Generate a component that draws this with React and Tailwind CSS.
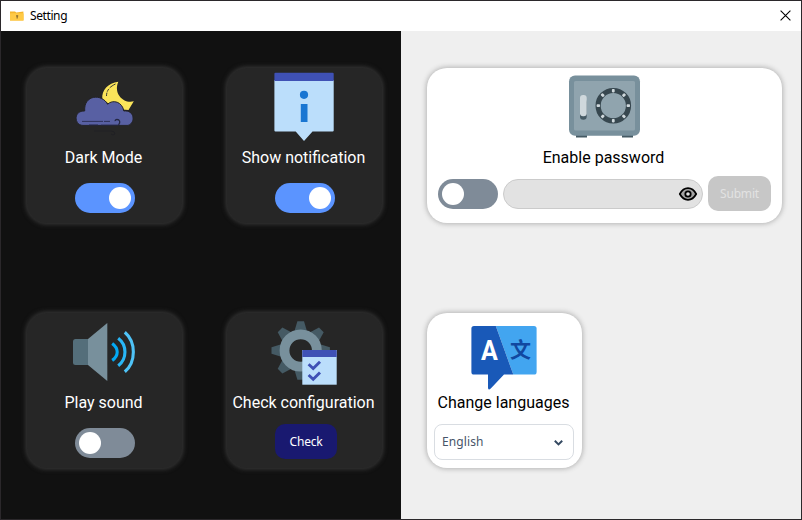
import React from "react";

function Toggle({ on, className = "" }) {
  return (
    <div
      className={`flex h-[30px] w-[60px] items-center rounded-full px-1 ${
        on ? "justify-end bg-[#5b94ff]" : "justify-start bg-[#7f8b98]"
      } ${className}`}
    >
      <div className="size-[22px] rounded-full bg-white" />
    </div>
  );
}

function Card({ dark, wide, icon, label, children }) {
  return (
    <section
      className={`mt-[37px] ml-[26px] flex h-[155px] flex-col items-center rounded-[20px] font-[Roboto,sans-serif] ${
        wide ? "w-[355px]" : "w-[155px]"
      } ${
        dark
          ? "bg-[#262626] text-white shadow-[0_0_5px_1px_#3c3c3c]"
          : "bg-white text-black shadow-[0_0_5px_1px_#b4b4b4]"
      }`}
    >
      <div className="h-[77px] w-[155px] shrink-0">{icon}</div>
      <div className="mt-px -ml-[2px] h-[23px] shrink-0 text-base leading-6 whitespace-nowrap">{label}</div>
      {children}
    </section>
  );
}

function MoonIcon() {
  return (
    <svg viewBox="27 68 155 77" className="size-full">
      <path d="M118.3 81.7C108 83 101.5 90 102.3 99L116 109L128.5 110L133.8 101.3C124 104 113 94 118.3 81.7Z" fill="#fbe55a" />
      <path d="M115.5 84C109 87 106.5 91 106.5 96" fill="none" stroke="#3a3932" strokeWidth="1" strokeDasharray="7 1.5 3 1" />
      <path
        d="M83 125.4C74 125.4 73 110.5 84.7 111C83.5 94.5 102 93.5 107.6 104.2C113 99 122.5 102 123.8 111C134.5 109.5 136 123 128 125.4Z"
        fill="#5860a3"
        stroke="#232329"
        strokeWidth="1"
      />
      <path d="M82 121.4H103M104 121.4H110" stroke="#2a2d50" strokeWidth="0.9" />
      <path d="M118.5 125C121 122 119.5 119.5 117 119.5Q115 119.5 115.2 121.2" fill="none" stroke="#242743" strokeWidth="1.3" />
      <path d="M89 125H98M101 125.2H118" stroke="#242743" strokeWidth="0.9" />
      <path d="M94 131H111Q115 131 115 134Q113 136 111 134" fill="none" stroke="#202024" strokeWidth="1" />
    </svg>
  );
}

function InfoIcon() {
  return (
    <svg viewBox="227 68 155 77" className="size-full">
      <path d="M274.4 80H333.7V130.5Q333.7 131.6 332.6 131.6H312.5L304 141L295.7 131.6H275.5Q274.4 131.6 274.4 130.5Z" fill="#bbdefb" />
      <path d="M274.4 81V73.8Q274.4 72.7 275.5 72.7H332.6Q333.7 72.7 333.7 73.8V81Z" fill="#3f51b5" />
      <circle cx="304" cy="94.8" r="4.1" fill="#1976d2" />
      <rect x="300.8" y="104" width="6.7" height="18" fill="#1976d2" />
    </svg>
  );
}

function SpeakerIcon() {
  return (
    <svg viewBox="27 313 155 77" className="size-full">
      <path d="M89 339H75.5Q73 339 73 341.5V362.5Q73 365 75.5 365H89Z" fill="#546e7a" />
      <path d="M88 339L107.3 323V381L88 365Z" fill="#78909c" />
      <g fill="none" strokeWidth="3.1">
        <path d="M112.2 343.4Q117.2 347 117.2 352T112.2 360.4" stroke="#03a9f4" />
        <path d="M118.2 338.2C127.2 345 127.2 359 118.2 365.8" stroke="#29b6f6" />
        <path d="M124.8 332.2C136.2 342 136.2 362 124.8 371.8" stroke="#4fc3f7" />
      </g>
    </svg>
  );
}

function GearIcon() {
  const teeth = [0, 45, 90, 135, 180, 225, 270, 315];
  return (
    <svg viewBox="227 313 155 77" className="size-full">
      {teeth.map((a) => (
        <path key={a} d="M294.2 332L297.4 321.3H304L307.2 332Z" fill="#455a64" transform={`rotate(${a} 300.7 350.5)`} />
      ))}
      <circle cx="300.7" cy="350.5" r="16.2" fill="none" stroke="#78909c" strokeWidth="9.8" />
      <rect x="302.3" y="350" width="34.4" height="34.7" fill="#bbdefb" />
      <path d="M302.3 357V350.7Q302.3 350 303 350H336Q336.7 350 336.7 350.7V357Z" fill="#3f51b5" />
      <path d="M308.6 364.2L313.2 368.5L320 361.7M308.6 375L313.2 379.3L320 372.5" fill="none" stroke="#3f51b5" strokeWidth="2.9" />
    </svg>
  );
}

function SafeIcon() {
  const bolts = [0, 45, 90, 135, 180, 225, 270, 315];
  return (
    <svg viewBox="527 68 155 77" className="size-full">
      <path d="M576 134H587V137.6H576ZM622 134H633V137.6H622Z" fill="#455a64" />
      <rect x="569" y="75.5" width="71" height="60.3" rx="6" fill="#78909c" />
      <rect x="574" y="81" width="61" height="49.5" rx="1.5" fill="#90a4ae" />
      <rect x="580" y="99" width="6.7" height="20.8" rx="3.3" fill="#455a64" />
      <rect x="580" y="95" width="6.7" height="21.3" rx="3" fill="#cfd8dc" />
      <circle cx="613.3" cy="105.7" r="15.2" fill="none" stroke="#37474f" strokeWidth="5.2" />
      {bolts.map((a) => (
        <rect key={a} x="611.9" y="89" width="2.8" height="3.4" rx="0.8" fill="#cfd8dc" transform={`rotate(${a} 613.3 105.7)`} />
      ))}
    </svg>
  );
}

function TranslateIcon() {
  return (
    <svg viewBox="427 313 155 77" className="size-full">
      <path d="M495.8 326H534Q536.6 326 536.6 328.6V372Q536.6 374.6 534 374.6H513.3Z" fill="#42a5f0" />
      <path d="M474 326H495.8L513.3 374.6H504L491 388.3Q488 391 488 387.5V374.6H474Q471.4 374.6 471.4 372V328.6Q471.4 326 474 326Z" fill="#1959b8" />
      <text x="489.3" y="360.3" textAnchor="middle" className="fill-white font-[Roboto,sans-serif] text-[27px] font-bold" textLength="16.8" lengthAdjust="spacingAndGlyphs">A</text>
      <text x="520.4" y="357.2" textAnchor="middle" className="fill-[#1148a0] font-['Noto_Sans_CJK_SC',sans-serif] text-[21px] font-bold">文</text>
    </svg>
  );
}

function EyeIcon() {
  return (
    <svg viewBox="0 0 20 16" className="h-4 w-5">
      <path d="M1.8 8Q5 2.2 10 2.2T18.2 8Q15 13.8 10 13.8T1.8 8Z" fill="#a3a3a3" stroke="#000" strokeWidth="1.8" strokeLinejoin="round" />
      <circle cx="10" cy="8" r="2.7" fill="#e2e2e2" stroke="#000" strokeWidth="1.8" />
    </svg>
  );
}

export default function App() {
  return (
    <div className="flex h-[520px] w-[802px] flex-col overflow-hidden border border-[#2b282b] bg-white font-['Noto_Sans',sans-serif]">
      <header className="flex h-[30px] shrink-0 items-center bg-white pr-[10px] pl-[9px]">
        <svg viewBox="0 0 14 10" className="-mt-px h-[10px] w-[14px]">
          <path d="M0 .6H5L6.3 1.6L13.4 .4V9.6H0Z" fill="#f5b62c" />
          <rect y="2.3" width="13.6" height="7.3" rx=".6" fill="#ffca46" />
          <path d="M6.1 4.2H8.2V5.6H7.7V7.4H6.6V5.6H6.1Z" fill="#83662b" />
        </svg>
        <span className="ml-[6px] text-xs tracking-[-0.4px] text-black">Setting</span>
        <svg viewBox="0 0 11 11" className="-mt-[2px] ml-auto size-[11px]">
          <path d="M.6 .6L10.4 10.4M10.4 .6L.6 10.4" stroke="#000" strokeWidth="1.1" />
        </svg>
      </header>

      <main className="flex flex-1">
        <div className="grid w-[400px] grid-cols-[200px_200px] grid-rows-[245px_243px] bg-[#111111]">
          <Card dark icon={<MoonIcon />} label="Dark Mode">
            <Toggle on className="mt-[14px] ml-px" />
          </Card>
          <Card dark icon={<InfoIcon />} label="Show notification">
            <Toggle on className="mt-[14px] ml-px" />
          </Card>
          <Card dark icon={<SpeakerIcon />} label="Play sound">
            <Toggle className="mt-[14px] ml-px" />
          </Card>
          <Card dark icon={<GearIcon />} label="Check configuration">
            <button className="mt-[10px] ml-[3px] h-[35px] w-[62px] rounded-[10px] bg-[#191970] text-center font-['Noto_Sans',sans-serif] text-xs tracking-[-0.2px] text-white">
              Check
            </button>
          </Card>
        </div>

        <div className="grid w-[400px] grid-rows-[245px_243px] bg-[#efefef]">
          <Card wide icon={<SafeIcon />} label="Enable password">
            <div className="mt-[7px] flex w-full items-center pl-[11px]">
              <Toggle />
              <div className="ml-[5px] flex h-[30px] w-[200px] items-center justify-end rounded-full border border-[#cbcbcb] bg-[#e2e2e2] pr-1">
                <EyeIcon />
              </div>
              <button className="ml-[5px] h-[35px] w-[63px] rounded-[10px] bg-[#c7c7c7] font-['Noto_Sans',sans-serif] text-xs tracking-[-0.2px] text-[#e2e2e2]">
                Submit
              </button>
            </div>
          </Card>
          <Card icon={<TranslateIcon />} label="Change languages">
            <div className="mt-[10px] -ml-px flex h-9 w-[140px] items-center justify-between rounded-lg border border-[#d9dde2] bg-white pr-[10px] pl-[7px]">
              <span className="font-['Noto_Sans',sans-serif] text-xs tracking-[0.1px] text-[#475569]">English</span>
              <svg viewBox="0 0 9 6" className="mt-[2px] h-[6px] w-[9px]">
                <path d="M.8 .8L4.5 4.4L8.2 .8" fill="none" stroke="#344961" strokeWidth="2" />
              </svg>
            </div>
          </Card>
        </div>
      </main>
    </div>
  );
}
